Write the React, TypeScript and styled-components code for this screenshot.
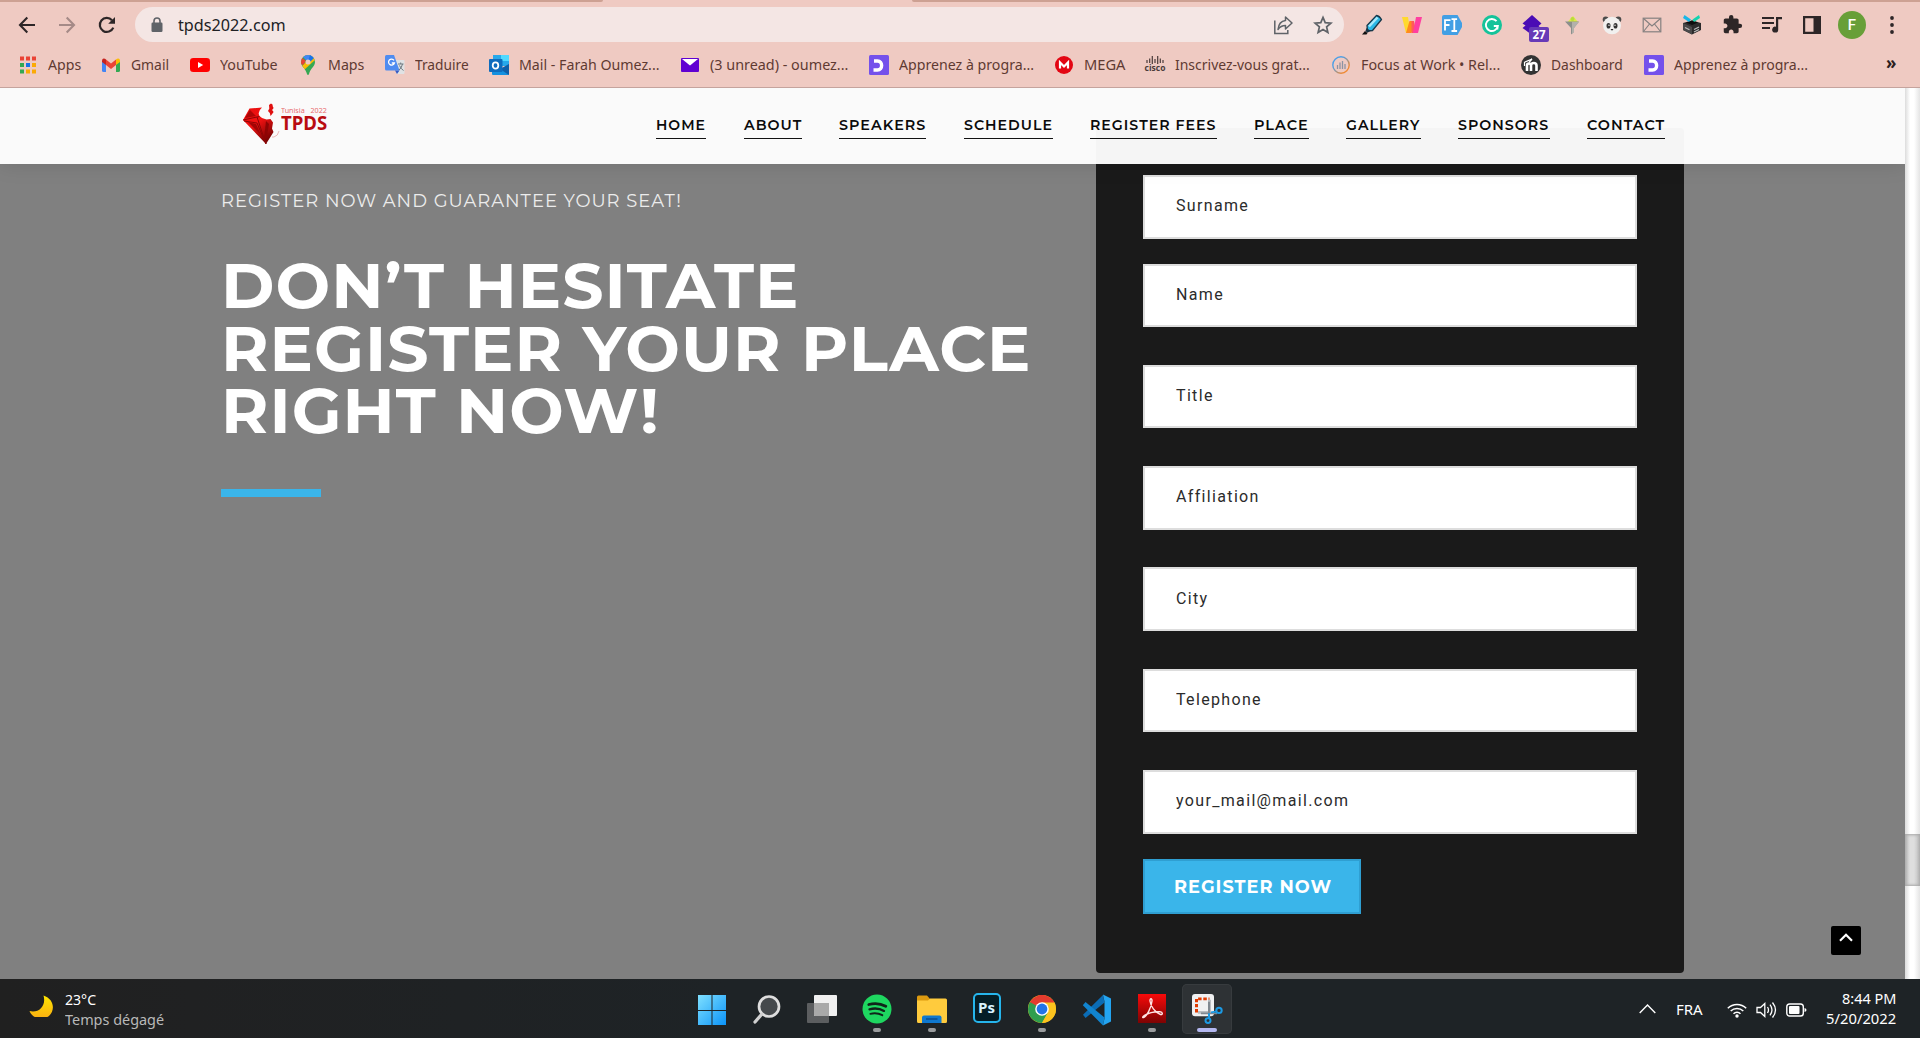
import React, { ReactNode, useLayoutEffect, useRef, useState } from "react";
import styled, { createGlobalStyle, css } from "styled-components";

const ui = '"Noto Sans", "Open Sans", sans-serif';
const display = 'Montserrat, Inter, "Open Sans", sans-serif';

const GlobalStyle = createGlobalStyle`
  *, *::before, *::after { box-sizing: border-box; }
  body { margin: 0; overflow: hidden; background: #808080; font-family: ${ui}; }
  svg { display: block; flex: none; }
`;

/* ---------- text that is stretched to a known width ---------- */
const FitBox = styled.span<{ $w: number }>`
  display: inline-block;
  flex: none;
  width: ${(p) => p.$w}px;
  white-space: nowrap;
`;
const FitInner = styled.span`
  display: inline-block;
  transform-origin: left center;
`;
function Fit({ w, children }: { w: number; children: ReactNode }) {
  const ref = useRef<HTMLSpanElement>(null);
  const [scale, setScale] = useState(1);
  useLayoutEffect(() => {
    if (ref.current) setScale(w / ref.current.offsetWidth);
  }, [w]);
  return (
    <FitBox $w={w}>
      <FitInner ref={ref} style={{ transform: `scaleX(${scale})` }}>{children}</FitInner>
    </FitBox>
  );
}

/* ---------- window ---------- */
const Screen = styled.div`
  width: 1920px;
  height: 1038px;
  display: flex;
  flex-direction: column;
  overflow: hidden;
`;

/* ---------- browser chrome ---------- */
const Chrome = styled.header`
  height: 88px;
  flex: none;
  background: #efcac2;
  border-bottom: 1px solid #c5a39d;
`;
const TabStrip = styled.div`
  height: 2px;
  display: flex;
  justify-content: space-between;
`;
const TabEdge = styled.div<{ $w: number; $side: "left" | "right" }>`
  width: ${(p) => p.$w}px;
  background: #cda193;
  ${(p) => (p.$side === "left" ? css`border-bottom-right-radius: 4px;` : css`border-bottom-left-radius: 4px;`)}
`;
const Toolbar = styled.div`
  height: 45px;
  display: flex;
  align-items: center;
`;
const NavButtons = styled.div`
  width: 135px;
  padding-left: 17px;
  display: flex;
  align-items: center;
  gap: 20px;
  flex: none;
`;
const Omnibox = styled.div`
  width: 1209px;
  height: 35px;
  border-radius: 18px;
  background: #f4e6e4;
  display: flex;
  align-items: center;
  padding: 0 5px 0 16px;
  flex: none;
`;
const Url = styled.div`
  flex: 1;
  padding-left: 15px;
  font-size: 16.5px;
  line-height: 24px;
  color: #202124;
`;
const OmniAction = styled.div`
  width: 32px;
  margin-left: 8px;
  display: flex;
  justify-content: center;
`;
const Extensions = styled.div`
  display: flex;
  padding-left: 8px;
`;
const ExtensionSlot = styled.div`
  position: relative;
  width: 40px;
  height: 36px;
  flex: none;
  display: flex;
  align-items: center;
  justify-content: center;
`;
const CountBadge = styled.span`
  position: absolute;
  left: 17px;
  top: 20px;
  width: 20px;
  height: 15px;
  border-radius: 2px;
  background: #673ab7;
  color: #fff;
  font: 700 11.5px/15px ${ui};
  text-align: center;
`;
const Avatar = styled.div`
  width: 28px;
  height: 28px;
  border-radius: 50%;
  background: #689f38;
  color: #fff;
  font: 500 15px/28px Roboto, sans-serif;
  text-align: center;
`;
const Bookmarks = styled.div`
  height: 36px;
  display: flex;
  align-items: center;
  gap: 20px;
  padding-left: 18px;
`;
const Bookmark = styled.div`
  display: flex;
  align-items: center;
  gap: 10px;
  font-size: 15px;
  line-height: 20px;
  color: #5f3a32;
`;
const BookmarkIcon = styled.div`
  width: 20px;
  height: 20px;
  display: flex;
  align-items: center;
  justify-content: center;
`;
const Label = styled.span<{ $w: number }>`
  width: ${(p) => p.$w}px;
  flex: none;
  display: flex;
  padding-bottom: 2px;
`;
const More = styled.div`
  margin-left: 58px;
  font-size: 17px;
  font-weight: 700;
  line-height: 20px;
  padding-bottom: 4px;
  color: #2c2020;
`;
const CiscoIcon = styled.div`
  display: flex;
  flex-direction: column;
  align-items: center;
  font: 700 8.5px/8px "Open Sans", sans-serif;
  color: #4a3b3a;
  padding-bottom: 3px;
`;
const MoodleIcon = styled.div`
  width: 20px;
  height: 20px;
  border-radius: 50%;
  background: #333;
  display: flex;
  align-items: center;
  justify-content: center;
`;

/* ---------- web page ---------- */
const Viewport = styled.div`
  height: 891px;
  flex: none;
  display: flex;
  position: relative;
`;
const Page = styled.main`
  width: 1905px;
  height: 891px;
  overflow: hidden;
  background: #808080;
  display: grid;
  grid-template-columns: 875px 588px;
  padding: 40px 0 0 221px;
  align-items: start;
`;
const SiteHeader = styled.div`
  position: absolute;
  left: 0;
  top: 0;
  width: 1905px;
  height: 76px;
  background: rgba(255, 255, 255, 0.958);
  box-shadow: 0 0 20px rgba(0, 0, 0, 0.13);
  clip-path: inset(0 0 -40px 0);
  display: flex;
  justify-content: space-between;
  padding: 0 240px 0 242px;
`;
const Logo = styled.div`
  display: flex;
  width: 86px;
  height: 44px;
  margin-top: 15px;
`;
const LogoText = styled.div`
  display: flex;
  flex-direction: column;
  margin-left: -5px;
`;
const LogoSmall = styled.div`
  height: 7px;
  font: 400 7.5px/8px "Noto Sans", sans-serif;
  color: #e86c6e;
  word-spacing: 4px;
  margin-top: 3px;
`;
const LogoBig = styled.div`
  font: 700 19px/20px "Noto Sans", sans-serif;
  color: #b90c10;
`;
const Menu = styled.nav`
  display: flex;
  gap: 37.5px;
  padding-top: 28px;
`;
const MenuLink = styled.a`
  height: 23px;
  border-bottom: 1px solid #111;
  color: #0b0b0b;
  font: 600 14px/19px ${display};
  letter-spacing: 1px;
`;
const Intro = styled.section`
  padding-top: 62px;
`;
const Kicker = styled.p`
  margin: 0;
  height: 22px;
  color: #ececec;
  font: 400 18px/22px ${display};
  letter-spacing: 1px;
`;
const Title = styled.h1`
  margin: 43px 0 0;
  color: #fff;
  font: 700 62.5px/62.5px ${display};
  letter-spacing: 1px;
`;
const TitleLine = styled.div`
  height: 62.5px;
`;
const Rule = styled.div`
  width: 100px;
  height: 8px;
  margin-top: 46.5px;
  background: #3ab5ea;
`;
const Card = styled.form`
  height: 845px;
  border-radius: 4px;
  background: #1a1a1a;
  padding: 47px 47px 0;
  display: flex;
  flex-direction: column;
  align-items: flex-start;
`;
const Field = styled.input<{ $gap: number }>`
  width: 494px;
  height: 63.6px;
  flex: none;
  margin: 0 0 ${(p) => p.$gap}px;
  padding: 0 31px 2px;
  border: 2px solid #ddd;
  border-radius: 0;
  outline: none;
  background: #fff;
  font: 400 16px Roboto, sans-serif;
  letter-spacing: 1.34px;
  &::placeholder { color: #2b2b2b; opacity: 1; }
`;
const Submit = styled.button`
  width: 218px;
  height: 55px;
  padding: 1px 0 0 29px;
  border: 2px solid #2f9fd2;
  background: #3ab5ea;
  color: #fff;
  text-align: left;
  font: 700 17.5px/22px ${display};
  letter-spacing: 1px;
`;
const ToTop = styled.button`
  position: absolute;
  left: 1831px;
  top: 838px;
  width: 30px;
  height: 29px;
  border: 0;
  padding: 7px 0 0;
  border-radius: 2px;
  background: #000;
  display: flex;
  justify-content: center;
  align-items: flex-start;
`;
const Scrollbar = styled.div`
  width: 15px;
  height: 891px;
  padding-top: 746px;
  background: linear-gradient(90deg, #dcdcdc 0, #fff 5px, #fff 9px, #e4e4e4 15px);
`;
const Thumb = styled.div`
  height: 52px;
  background: linear-gradient(90deg, #b8b8b8 0, #dedede 5px, #dedede 9px, #bcbcbc 15px);
  box-shadow: inset 0 1px 3px #aaa, inset 0 -1px 3px #aaa;
`;

/* ---------- taskbar ---------- */
const Taskbar = styled.footer`
  height: 59px;
  flex: none;
  display: grid;
  grid-template-columns: 684px 555px 1fr;
  background: linear-gradient(90deg, #202020 0, #202122 10%, #1e2326 38%, #1e2326 100%);
  color: #fff;
  font-size: 15px;
  line-height: 20px;
`;
const Weather = styled.div`
  display: flex;
  padding: 10px 0 0 28px;
  gap: 11px;
`;
const Muted = styled.div`
  color: #b9b9b9;
`;
const Dock = styled.div`
  display: flex;
`;
const DockItem = styled.div`
  width: 55px;
  display: flex;
  justify-content: center;
  padding-top: 5px;
`;
const DockTile = styled.div<{ $active?: boolean }>`
  width: 50px;
  height: 50px;
  border-radius: 5px;
  display: flex;
  flex-direction: column;
  align-items: center;
  padding-top: 10px;
  gap: 4px;
  ${(p) => p.$active && css`background: #2e3235; box-shadow: inset 0 0 0 1px #373b3e;`}
`;
const Indicator = styled.div<{ $wide?: boolean }>`
  width: ${(p) => (p.$wide ? 20 : 8)}px;
  height: 4px;
  flex: none;
  border-radius: 2px;
  background: ${(p) => (p.$wide ? "#b4b8f0" : "#9a9c9e")};
`;
const PsIcon = styled.div`
  width: 28px;
  height: 30px;
  border: 2px solid #26b5ec;
  border-radius: 5px;
  background: #051e26;
  color: #d8f3ff;
  font: 700 15px/24px "Open Sans", sans-serif;
  text-align: center;
  margin-top: -1px;
`;
const Tray = styled.div`
  display: flex;
  align-items: center;
  justify-content: flex-end;
  padding: 0 24px 0 0;
`;
const Lang = styled.div`
  margin: 0 24px 0 20px;
`;
const Status = styled.div`
  display: flex;
  gap: 9px;
  margin: 2px 19px 0 0;
`;
const Clock = styled.div`
  width: 70px;
  display: flex;
  flex-direction: column;
  align-items: flex-end;
  padding-bottom: 1px;
`;

/* ---------- icons ---------- */
const dark = "#2d2627";

const Back = ({ color = dark, flip = false }: { color?: string; flip?: boolean }) => (
  <svg width="20" height="20" viewBox="0 0 20 20" fill="none" stroke={color} strokeWidth="2.1" transform={flip ? "scale(-1 1)" : undefined}>
    <path d="M18 10H3M10.3 2.6L3 10l7.3 7.4" />
  </svg>
);
const Reload = () => (
  <svg width="20" height="20" viewBox="0 0 20 20" fill="none" stroke={dark} strokeWidth="2.2">
    <path d="M16.300 12.600A7 7 0 1 1 15 5.200" />
    <path d="M18 2v6.800h-6.800z" fill={dark} stroke="none" />
  </svg>
);
const Lock = () => (
  <svg width="12" height="16" viewBox="0 0 12 16">
    <rect x=".5" y="5.500" width="11" height="9.500" rx="1.200" fill="#5f6368" />
    <path d="M3 6V4a3 3 0 0 1 6 0v2" fill="none" stroke="#5f6368" strokeWidth="1.600" />
  </svg>
);
const Share = () => (
  <svg width="20" height="20" viewBox="0 0 20 20" fill="none" stroke="#5f6368" strokeWidth="1.500">
    <path d="M1.800 5.500v13h13V15" />
    <path d="M12.500 2l6.500 6-6.500 6v-3.500c-3 0-5.500 1-7.500 4 .5-5 3-8.500 7.500-9z" strokeLinejoin="round" />
  </svg>
);
const Star = () => (
  <svg width="20" height="20" viewBox="0 0 20 20" fill="none" stroke="#5f6368" strokeWidth="1.700">
    <path d="M10 2.400l2.200 5.300 5.700.5-4.300 3.700 1.300 5.600-4.900-3-4.900 3 1.300-5.600L2.100 8.200l5.700-.5z" />
  </svg>
);
const Highlighter = () => (
  <svg width="22" height="22" viewBox="0 0 22 22">
    <path d="M6 11.500L15.500 1.500q3 .5 5 4L11.500 16.500 6.500 17z" fill="#2bb8e6" stroke="#17384a" strokeWidth="1.300" strokeLinejoin="round" />
    <path d="M8 12.500L16.500 3.500" stroke="#a8e9fb" strokeWidth="2.400" />
    <path d="M5.500 14l-1 3 2 1.800 3-2z" fill="#153243" />
    <path d="M4 17L1 20.500h4.500l1-1.500z" fill="#111" />
  </svg>
);
const WIcon = () => (
  <svg width="20" height="16" viewBox="0 0 20 16">
    <path d="M0 0h6l2.500 16H4z" fill="#ffd92e" />
    <path d="M4 16L7.500 4h3.500l.5 6-2 6z" fill="#ff8a1e" />
    <path d="M9.500 4H12l2.500 12h-5z" fill="#ff5a5a" />
    <path d="M14 0h6l-4 16h-5z" fill="#ff3fa0" />
  </svg>
);
const FIIcon = () => (
  <svg width="20" height="20" viewBox="0 0 20 20">
    <path d="M2 0h13.500L20 8v4L15.500 20H2a2 2 0 0 1-2-2V2a2 2 0 0 1 2-2z" fill="#429fe4" />
    <path d="M3 15.500V5.200h5.500M3 10h4.500M9.500 4.200h2l.8.8.8-.8h2M9.500 16h2l.8-.8.800.8h2M12.300 5v10" fill="none" stroke="#fff" strokeWidth="1.800" />
  </svg>
);
const Grammarly = () => (
  <svg width="20" height="20" viewBox="0 0 20 20">
    <circle cx="10" cy="10" r="10" fill="#15c39a" />
    <path d="M14.500 6.200A6 6 0 1 0 15.800 11h-4M15.800 11l-.6 3.500" fill="none" stroke="#fff" strokeWidth="1.900" />
  </svg>
);
const Layers = () => (
  <svg width="20" height="20" viewBox="0 0 20 20">
    <path d="M10 0l9.500 8.500-3 2.500 3 2.500L10 20 .5 13l3-2.500-3-2z" fill="#4a0cb5" />
  </svg>
);
const Funnel = () => (
  <svg width="16" height="20" viewBox="0 0 16 20">
    <path d="M3.500 7L9 1l5 6z" fill="#dfea4a" />
    <circle cx="8.500" cy="4" r="2" fill="#b9dc3c" />
    <path d="M1 6.500h14l-5 6.500v4l-3 2.500V13z" fill="#8c8f8c" />
    <path d="M8 7h7l-5 6v4l-2 2z" fill="#b3b1ab" />
  </svg>
);
const Panda = () => (
  <svg width="20" height="20" viewBox="0 0 20 20">
    <circle cx="3.700" cy="4.500" r="3" fill="#4b4b4b" /><circle cx="16.300" cy="4.500" r="3" fill="#4b4b4b" />
    <ellipse cx="10" cy="10.500" rx="9" ry="8.700" fill="#f1f0ef" />
    <ellipse cx="6.500" cy="10.800" rx="2" ry="2.800" fill="#333" /><ellipse cx="13.500" cy="10.800" rx="2" ry="2.800" fill="#333" />
    <circle cx="7" cy="10.300" r=".7" fill="#fff" /><circle cx="13" cy="10.300" r=".7" fill="#fff" />
    <path d="M8.500 14h3L10 15.800z" fill="#222" />
  </svg>
);
const Envelope = () => (
  <svg width="20" height="16" viewBox="0 0 20 16" fill="none" stroke="#858080" strokeWidth="1.200">
    <rect x="1.200" y="1.200" width="17.600" height="13.600" />
    <path d="M1.500 1.500L10 9l8.500-7.500M1.500 14.500l6-7.500M18.500 14.500l-6-7.500" />
  </svg>
);
const BoxIcon = () => (
  <svg width="20" height="20" viewBox="0 0 20 20">
    <path d="M1 8l9-2.500L19 8v7l-9 4.500L1 15z" fill="#2b2a2b" />
    <path d="M1 8l9 4v7.500L1 15z" fill="#4a494a" />
    <path d="M3 12.500l4.500 2.200M12 14.500l5-2.500M12 17l5-2.500" stroke="#bdbdbd" strokeWidth="1.200" />
    <path d="M4 7.500l6-2 6 2-6 2.500z" fill="#0d0d0d" />
    <path d="M2.500 0L9 4.500 7 7 1 3z" fill="#18b7e8" /><path d="M17 0l-6.500 4.500L12 7l6-4z" fill="#14d3b0" />
  </svg>
);
const Puzzle = () => (
  <svg width="21" height="21" viewBox="0 0 24 24" fill={dark}>
    <path d="M20.500 11H19V7c0-1.100-.9-2-2-2h-4V3.500a2.500 2.500 0 0 0-5 0V5H4c-1.100 0-1.990.9-1.990 2v3.800H3.500c1.490 0 2.700 1.210 2.700 2.700s-1.210 2.700-2.700 2.700H2V20c0 1.100.9 2 2 2h3.800v-1.500c0-1.490 1.210-2.700 2.700-2.700s2.700 1.210 2.700 2.700V22H17c1.100 0 2-.9 2-2v-4h1.500a2.500 2.500 0 0 0 0-5z" />
  </svg>
);
const Music = () => (
  <svg width="20" height="18" viewBox="0 0 20 18" fill={dark}>
    <path d="M0 1h12v2H0zM0 6h12v2H0zM0 11h8v2H0z" />
    <path d="M14 1h6v2.200h-3.800v10.300A3 3 0 1 1 14 10.700z" />
  </svg>
);
const SidePanel = () => (
  <svg width="18" height="18" viewBox="0 0 18 18"><path d="M0 0h18v18H0zM2.200 2.200v13.600h8.300V2.200z" fillRule="evenodd" fill={dark} /></svg>
);
const Dots = () => (
  <svg width="4" height="18" viewBox="0 0 4 18" fill={dark}><circle cx="2" cy="2" r="1.900" /><circle cx="2" cy="9" r="1.900" /><circle cx="2" cy="16" r="1.900" /></svg>
);

const AppsGrid = () => (
  <svg width="16" height="18" viewBox="0 0 16 18">
    {["#ea4335", "#ea4335", "#ea4335", "#34a853", "#1a73e8", "#fbaa05", "#34a853", "#fbaa05", "#fbaa05"].map((c, i) => (
      <rect key={i} x={(i % 3) * 6} y={Math.floor(i / 3) * 6.5 + 0.5} width="4" height="4" fill={c} />
    ))}
  </svg>
);
const Gmail = () => (
  <svg width="18" height="14" viewBox="0 0 18 14">
    <path d="M0 3v9.500Q0 14 1.500 14H4V5z" fill="#4285f4" /><path d="M18 3v9.500q0 1.500-1.500 1.500H14V5z" fill="#34a853" />
    <path d="M4 1.500L9 5.500l5-4V7l-5 4-5-4z" fill="#ea4335" />
    <path d="M0 2.500Q.3-.3 3 .7L4 1.500V7L0 4z" fill="#c5221f" /><path d="M18 2.500Q17.700-.3 15 .7l-1 .8V7l4-3z" fill="#fbbc04" />
  </svg>
);
const YouTube = () => (
  <svg width="20" height="14" viewBox="0 0 20 14"><rect width="20" height="14" rx="3.300" fill="#f00" /><path d="M8 4l5.200 3L8 10z" fill="#fff" /></svg>
);
const MapsPin = () => (
  <svg width="14" height="20" viewBox="0 0 14 20">
    <defs><clipPath id="pin"><path d="M7 0a7 7 0 0 1 7 7c0 4.500-4.500 6-6 12q-.4 1-1 1t-1-1C4.500 13 0 11.500 0 7a7 7 0 0 1 7-7z" /></clipPath></defs>
    <g clipPath="url(#pin)">
      <rect width="14" height="20" fill="#34a853" />
      <path d="M0 12L11 1l3 4L3 15z" fill="#fbbc04" />
      <path d="M3 0h9L7 7 2 2z" fill="#4285f4" />
      <path d="M9 0h3l1 3-4 4-2-1z" fill="#1a73e8" />
      <path d="M0 2l5 4-3 4-3-1z" fill="#ea4335" />
    </g>
    <circle cx="7" cy="7" r="2.500" fill="#efcac2" />
  </svg>
);
const Translate = () => (
  <svg width="20" height="20" viewBox="0 0 20 20">
    <path d="M8 5h10.500q1 0 1 1v12q0 1-1 1H12z" fill="#dfe2e4" />
    <path d="M1.500 0H9l5.500 15.500H1.500Q0 15.500 0 14V1.500Q0 0 1.500 0z" fill="#4f8cf0" />
    <path d="M10 15.500h4.500L12 19z" fill="#3459c4" />
    <path d="M9 5.300A3 3 0 1 0 9.400 8H6.800" fill="none" stroke="#fff" strokeWidth="1.300" />
    <path d="M13 9h5.500M15.700 7.500V9M17.500 9q-.8 4-3.500 6M14.500 10.500q1.500 3.500 4 5" stroke="#6f7a80" fill="none" />
  </svg>
);
const Outlook = () => (
  <svg width="20" height="20" viewBox="0 0 20 20">
    <path d="M4 0h15q1 0 1 1v10H4z" fill="#28a8ea" /><path d="M12 0h8v6h-8z" fill="#50d9ff" />
    <path d="M3 10l9 5 8-6v10q0 1-1 1H4q-1 0-1-1z" fill="#1490df" /><path d="M11 14l9-5v11z" fill="#0f5fa8" />
    <rect y="4" width="13.500" height="13" rx="1" fill="#0f6cbd" />
    <ellipse cx="6.500" cy="10.500" rx="2.800" ry="3.200" fill="none" stroke="#fff" strokeWidth="1.800" />
  </svg>
);
const YahooMail = () => (
  <svg width="18" height="14" viewBox="0 0 18 14"><rect width="18" height="14" rx="1" fill="#6001d2" /><path d="M1 1h16L9 7.500z" fill="#fff" /></svg>
);
const OClass = () => (
  <svg width="20" height="20" viewBox="0 0 20 20"><rect width="20" height="20" rx="1.500" fill="#7451eb" /><path d="M5 6h3.500c5.500 0 5.500 9 0 9H4.500" fill="none" stroke="#fff" strokeWidth="3.400" /></svg>
);
const Mega = () => (
  <svg width="18" height="18" viewBox="0 0 18 18"><circle cx="9" cy="9" r="9" fill="#e30613" /><path d="M5 12.500V6.500l4 4 4-4v6" fill="none" stroke="#fff" strokeWidth="2.200" /></svg>
);
const CiscoBars = () => (
  <svg width="18" height="8" viewBox="0 0 18 8" stroke="#4a3b3a" strokeWidth="1.200"><path d="M1 4v3M3.700 2.500V7M6.300 0v8M9 3v4M11.700 0v8M14.300 2.500V7M17 4v3" /></svg>
);
const Focus = () => (
  <svg width="18" height="18" viewBox="0 0 18 18" fill="none">
    <defs><linearGradient id="fr" x1="0" y1="0" x2="1" y2="1"><stop offset=".3" stopColor="#4c9fe6" /><stop offset=".8" stopColor="#f08a34" /></linearGradient></defs>
    <circle cx="9" cy="9" r="8.200" stroke="url(#fr)" strokeWidth="1.400" />
    <path d="M5.500 9v4M8 6.500V13M10.500 5v8M13 8v5" stroke="#8d93a3" strokeWidth="1.300" />
  </svg>
);
const MoodleM = () => (
  <svg width="16" height="14" viewBox="0 0 16 14" fill="none" stroke="#fff">
    <path d="M4 13V7.500q0-2 2-2t2 2V13M8 7.500q0-2.500 2.700-2.500T13.500 7.500V13" strokeWidth="2.600" />
    <path d="M1 4.500L9 1 6 4.500M1.500 4.500V8" strokeWidth="1.200" />
  </svg>
);

const Diamond = () => (
  <svg width="44" height="42" viewBox="0 0 44 42">
    <defs><linearGradient id="dm" x1="0" y1="0" x2=".6" y2="1"><stop offset="0" stopColor="#e80d0d" /><stop offset=".5" stopColor="#f01212" /><stop offset="1" stopColor="#7b0303" /></linearGradient></defs>
    <path d="M1 17L7.500 5.500 20 4.500Q15 9 17.500 13q2.500 3 7 3.500l4-.5 2.500 3.500-1 6 1.500 3.500L24 41z" fill="url(#dm)" />
    <path d="M1 17l14-3 2.500-.5M15 14l9 27M2 18l13 2 9 21" stroke="#8c0505" strokeWidth="1" fill="none" />
    <path d="M3 15l5-8 6 6z" fill="#ae0606" /><path d="M6 19l8 2 5 11z" fill="#a10505" />
    <path d="M24 18l-2 18 3-3 2-12z" fill="#8d0404" />
    <path d="M27 2l2-1.500 1.500 1 .3 2 .8 1.500-1.500 2 1.500 2-1.500 2-1.500 2-.8-3-1.800-2 1.300-2.500z" fill="#e01010" />
    <path d="M37 28q-1 5-5 6h-2" stroke="#e6a7a7" fill="none" strokeWidth=".8" />
  </svg>
);

const Moon = () => (
  <svg width="26" height="28" viewBox="0 0 26 28">
    <defs><linearGradient id="mn" x1="0" y1="0" x2="0" y2="1"><stop offset="0" stopColor="#ffe600" /><stop offset="1" stopColor="#f9ae12" /></linearGradient></defs>
    <path d="M15.500 6.500C26 10 27.500 21 21 27 14 32 4.500 29.500 1.500 22 11 24.500 18.500 16.500 15.500 6.500z" fill="url(#mn)" />
  </svg>
);
const Windows = () => (
  <svg width="30" height="32" viewBox="0 0 30 32">
    <defs><linearGradient id="wn" x1="0" y1="0" x2="1" y2="1"><stop offset="0" stopColor="#7fe0ff" /><stop offset="1" stopColor="#0b93f8" /></linearGradient></defs>
    <path d="M1 1h13.500v15H1zM15.500 1H29v15H15.500zM1 17h13.500v14H1zM15.500 17H29v14H15.500z" fill="url(#wn)" />
  </svg>
);
const Search = () => (
  <svg width="30" height="30" viewBox="0 0 30 30">
    <circle cx="17" cy="12.500" r="10" fill="#45494c" stroke="#dedede" strokeWidth="2.700" />
    <path d="M9.500 20.500L3 28" stroke="#d0d0d0" strokeWidth="3.300" strokeLinecap="round" />
  </svg>
);
const TaskView = () => (
  <svg width="32" height="30" viewBox="0 0 32 30"><rect x="1" y="9" width="22" height="20" rx="1" fill="#5c5e60" /><rect x="8" y="1" width="23" height="21" rx="1" fill="#f0f0f0" /><path d="M8 9h15v13H9q-1 0-1-1z" fill="#a9a9a9" /></svg>
);
const Spotify = () => (
  <svg width="30" height="30" viewBox="0 0 30 30" fill="none" stroke="#10241a" strokeLinecap="round">
    <circle cx="15" cy="15" r="14.500" fill="#1ed760" stroke="none" />
    <path d="M6.800 10.500q9-2.600 17 1.800" strokeWidth="2.800" /><path d="M7.500 15.300q8-2.200 14.500 1.600" strokeWidth="2.300" /><path d="M8.300 19.800q6.500-1.700 12 1.400" strokeWidth="1.900" />
  </svg>
);
const Folder = () => (
  <svg width="30" height="30" viewBox="0 0 30 30">
    <path d="M0 3q0-1.500 1.500-1.500H10L13 5v5H0z" fill="#dc9a10" />
    <path d="M0 6.500h11l2-2h15.500Q30 4.500 30 6v21.500Q30 29 28.500 29h-27Q0 29 0 27.500z" fill="#ffcb3d" />
    <path d="M5 29v-5.500q0-2 2-2h15.500q2 0 2 2V29z" fill="#0f78cf" /><path d="M9 25h11.500" stroke="#0a4d91" strokeWidth="1.500" />
  </svg>
);
const ChromeLogo = () => (
  <svg width="30" height="30" viewBox="0 0 30 30">
    <circle cx="15" cy="15" r="14" fill="#fcc31e" />
    <path d="M15 15L2.900 8A14 14 0 0 0 15 29l6-10.500z" fill="#2f9e4f" />
    <path d="M2.900 8a14 14 0 0 1 24.200 0H15l-5 10z" fill="#e33b2e" />
    <path d="M27.100 8A14 14 0 0 1 15 29l6-10.500L20 8z" fill="#fcc31e" />
    <path d="M2.900 8L9 18.500l3 3L15 15z" fill="#2f9e4f" /><path d="M15 8.500h12.400L27 8q-6-8-15-6.700L10 12z" fill="#e33b2e" />
    <circle cx="15" cy="15" r="6.800" fill="#fff" /><circle cx="15" cy="15" r="5.400" fill="#2374e8" />
  </svg>
);
const VSCode = () => (
  <svg width="30" height="32" viewBox="0 0 30 30" preserveAspectRatio="none">
    <path d="M1 19.500L21 1l1.500 7L3.500 22.500z" fill="#0b6cb5" /><path d="M3.500 7.500L22.500 22 21 29.500.8 10.500z" fill="#1184cf" />
    <path d="M21 .5l8 3.800v21.400l-8 3.800 1.500-6.500V7z" fill="#23a4f1" />
  </svg>
);
const Acrobat = () => (
  <svg width="30" height="30" viewBox="0 0 30 30">
    <defs><linearGradient id="ac" x1="0" y1="0" x2="0" y2="1"><stop offset="0" stopColor="#f80a0a" /><stop offset="1" stopColor="#7d0303" /></linearGradient></defs>
    <rect x="1" width="28" height="29" fill="url(#ac)" />
    <path d="M6.500 23.500c3-1 8-10 8.500-16.500.2-3-2.200-3-2 0 .5 5 5 11.500 10.500 13.500 2.500.5 2.500-2.500-.5-2.700-4.500-.3-11 1-15.500 3.500-2.500 1.500-2 2.700-1 2.200z" fill="none" stroke="#ffe5e5" strokeWidth="1.400" />
  </svg>
);
const Snip = () => (
  <svg width="32" height="30" viewBox="0 0 32 31" preserveAspectRatio="none">
    <rect x="1" y="0" width="22" height="23" rx="3" fill="#f0f1f2" />
    <path d="M5.500 19V5h13" fill="none" stroke="#e03b00" strokeWidth="3" strokeDasharray="3.500 1.700" />
    <path d="M18.500 6v13H7" fill="none" stroke="#b9bdc1" strokeWidth="3" /><path d="M18 8v16M10 20h16" stroke="#808890" strokeWidth="2" />
    <circle cx="28" cy="17" r="2.700" fill="none" stroke="#1c9ae4" strokeWidth="2" /><circle cx="17" cy="27.500" r="2.500" fill="none" stroke="#1c9ae4" strokeWidth="2" />
    <path d="M20 19l6-1M18 20v5" stroke="#1c9ae4" strokeWidth="2" />
  </svg>
);
const Chevron = () => (
  <svg width="17" height="10" viewBox="0 0 17 10" fill="none" stroke="#fff" strokeWidth="1.400"><path d="M.7 9l7.800-8 7.800 8" /></svg>
);
const Wifi = () => (
  <svg width="20" height="18" viewBox="0 0 20 18" fill="none" stroke="#fff" strokeWidth="1.500">
    <path d="M.8 7.200a13 13 0 0 1 18.400 0M3.700 10a9 9 0 0 1 12.600 0M6.500 12.800a5 5 0 0 1 7 0" /><circle cx="10" cy="15" r="1.700" fill="#fff" stroke="none" />
  </svg>
);
const Speaker = () => (
  <svg width="21" height="18" viewBox="0 0 21 18" fill="none" stroke="#fff" strokeWidth="1.300">
    <path d="M1 6.500h3.500L8.800 2.500v13L4.500 11.500H1z" /><path d="M11.500 6q2 3 0 6M14 3.700q4 5.300 0 10.600M16.500 1.500q6 7.500 0 15" />
  </svg>
);
const Battery = () => (
  <svg width="21" height="18" viewBox="0 0 21 18"><rect x=".8" y="3" width="16.500" height="12" rx="2.800" fill="none" stroke="#fff" strokeWidth="1.400" /><rect x="3" y="5" width="10.500" height="8" rx="1" fill="#fff" /><path d="M18.500 7q2 .3 2 2t-2 2z" fill="#fff" /></svg>
);

/* ---------- data ---------- */
const bookmarks: { icon: ReactNode; label: string; w: number; box: number }[] = [
  { icon: <AppsGrid />, label: "Apps", w: 33, box: 33 },
  { icon: <Gmail />, label: "Gmail", w: 38, box: 39 },
  { icon: <YouTube />, label: "YouTube", w: 58, box: 58 },
  { icon: <MapsPin />, label: "Maps", w: 36, box: 37 },
  { icon: <Translate />, label: "Traduire", w: 54, box: 54 },
  { icon: <Outlook />, label: "Mail - Farah Oumez...", w: 141, box: 141 },
  { icon: <YahooMail />, label: "(3 unread) - oumez...", w: 138, box: 139 },
  { icon: <OClass />, label: "Apprenez à progra...", w: 135, box: 135 },
  { icon: <Mega />, label: "MEGA", w: 41, box: 41 },
  { icon: <CiscoIcon><CiscoBars />cisco</CiscoIcon>, label: "Inscrivez-vous grat...", w: 135, box: 136 },
  { icon: <Focus />, label: "Focus at Work • Rel...", w: 139, box: 140 },
  { icon: <MoodleIcon><MoodleM /></MoodleIcon>, label: "Dashboard", w: 72, box: 73 },
  { icon: <OClass />, label: "Apprenez à progra...", w: 134, box: 134 },
];

const extensions: ReactNode[] = [
  <Highlighter />, <WIcon />, <FIIcon />, <Grammarly />,
  <><Layers /><CountBadge>27</CountBadge></>,
  <Funnel />, <Panda />, <Envelope />, <BoxIcon />, <Puzzle />, <Music />, <SidePanel />,
  <Avatar>F</Avatar>, <Dots />,
];

const menu: [string, number][] = [
  ["HOME", 50], ["ABOUT", 58], ["SPEAKERS", 87], ["SCHEDULE", 89], ["REGISTER FEES", 126.5],
  ["PLACE", 54.5], ["GALLERY", 74.5], ["SPONSORS", 91.5], ["CONTACT", 78],
];

const fields: [string, number][] = [
  ["Surname", 25], ["Name", 37.7], ["Title", 37.7], ["Affiliation", 37.7], ["City", 37.7], ["Telephone", 37.7], ["your_mail@mail.com", 25],
];

const dock: { icon: ReactNode; running?: boolean; active?: boolean }[] = [
  { icon: <Windows /> }, { icon: <Search /> }, { icon: <TaskView /> },
  { icon: <Spotify />, running: true }, { icon: <Folder />, running: true },
  { icon: <PsIcon>Ps</PsIcon> }, { icon: <ChromeLogo />, running: true },
  { icon: <VSCode /> }, { icon: <Acrobat />, running: true },
  { icon: <Snip />, active: true },
];

export default function App() {
  return (
    <>
      <GlobalStyle />
      <Screen>
        <Chrome>
          <TabStrip>
            <TabEdge $w={603} $side="left" />
            <TabEdge $w={1008} $side="right" />
          </TabStrip>
          <Toolbar>
            <NavButtons>
              <Back />
              <Back color="#a58a87" flip />
              <Reload />
            </NavButtons>
            <Omnibox>
              <Lock />
              <Url><Fit w={108}>tpds2022.com</Fit></Url>
              <OmniAction><Share /></OmniAction>
              <OmniAction><Star /></OmniAction>
            </Omnibox>
            <Extensions>
              {extensions.map((icon, i) => <ExtensionSlot key={i}>{icon}</ExtensionSlot>)}
            </Extensions>
          </Toolbar>
          <Bookmarks>
            {bookmarks.map((b, i) => (
              <Bookmark key={i}>
                <BookmarkIcon>{b.icon}</BookmarkIcon>
                <Label $w={b.box}><Fit w={b.w}>{b.label}</Fit></Label>
              </Bookmark>
            ))}
            <More>»</More>
          </Bookmarks>
        </Chrome>

        <Viewport>
          <Page>
            <Intro>
              <Kicker><Fit w={461}>REGISTER NOW AND GUARANTEE YOUR SEAT!</Fit></Kicker>
              <Title>
                <TitleLine><Fit w={579}>DON’T HESITATE</Fit></TitleLine>
                <TitleLine><Fit w={811}>REGISTER YOUR PLACE</Fit></TitleLine>
                <TitleLine><Fit w={439}>RIGHT NOW!</Fit></TitleLine>
              </Title>
              <Rule />
            </Intro>
            <Card>
              {fields.map(([name, gap]) => <Field key={name} placeholder={name} $gap={gap} />)}
              <Submit type="button"><Fit w={158}>REGISTER NOW</Fit></Submit>
            </Card>
          </Page>
          <Scrollbar><Thumb /></Scrollbar>
          <SiteHeader>
            <Logo>
              <Diamond />
              <LogoText>
                <LogoSmall><Fit w={46}>Tunisia 2022</Fit></LogoSmall>
                <LogoBig><Fit w={46}>TPDS</Fit></LogoBig>
              </LogoText>
            </Logo>
            <Menu>
              {menu.map(([label, w]) => <MenuLink key={label}><Fit w={w}>{label}</Fit></MenuLink>)}
            </Menu>
          </SiteHeader>
          <ToTop>
            <svg width="14" height="9" viewBox="0 0 14 9" fill="none" stroke="#fff" strokeWidth="2.200"><path d="M1 7.800L7 1.800l6 6" /></svg>
          </ToTop>
        </Viewport>

        <Taskbar>
          <Weather>
            <Moon />
            <div>
              <div><Fit w={31}>23°C</Fit></div>
              <Muted><Fit w={99}>Temps dégagé</Fit></Muted>
            </div>
          </Weather>
          <Dock>
            {dock.map((d, i) => (
              <DockItem key={i}>
                <DockTile $active={d.active}>
                  {d.icon}
                  {(d.running || d.active) && <Indicator $wide={d.active} />}
                </DockTile>
              </DockItem>
            ))}
          </Dock>
          <Tray>
            <Chevron />
            <Lang><Fit w={27}>FRA</Fit></Lang>
            <Status><Wifi /><Speaker /><Battery /></Status>
            <Clock>
              <Fit w={54}>8:44 PM</Fit>
              <Fit w={70}>5/20/2022</Fit>
            </Clock>
          </Tray>
        </Taskbar>
      </Screen>
    </>
  );
}
